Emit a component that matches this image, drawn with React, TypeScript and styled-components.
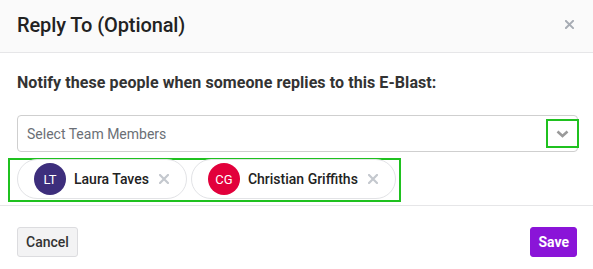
import React from "react";
import styled, { createGlobalStyle } from "styled-components";

const Global = createGlobalStyle`
  html, body { margin: 0; padding: 0; background: #ffffff; }
  body { font-family: Roboto, "Liberation Sans", Arial, sans-serif; color: #2b2b2b; }
  * { box-sizing: border-box; }
`;

const Modal = styled.div`
  width: 593px;
  height: 269px;
  background: #ffffff;
  display: flex;
  flex-direction: column;
`;

const Header = styled.div`
  height: 53px;
  background: #fafafa;
  border-bottom: 1px solid #e6e6e8;
  display: flex;
  align-items: center;
  justify-content: space-between;
  padding: 0 19px 2px 17px;
`;

const Title = styled.h2`
  margin: 0;
  font-size: 20px;
  font-weight: 500;
  color: #222222;
  letter-spacing: -0.1px;
`;

const CloseButton = styled.button`
  border: 0;
  background: transparent;
  padding: 0;
  width: 10px;
  height: 10px;
  display: flex;
  align-items: center;
  justify-content: center;
  cursor: pointer;
  margin-bottom: 2px;
`;

const Body = styled.div`
  padding: 20px 15px 3px 17px;
  display: flex;
  flex-direction: column;
`;

const Label = styled.div`
  font-size: 16px;
  line-height: 20px;
  font-weight: 700;
  color: #333333;
  letter-spacing: 0.08px;
  margin-bottom: 22px;
`;

const Select = styled.div`
  height: 37px;
  border: 1px solid #cfcfcf;
  border-radius: 4px;
  display: flex;
  align-items: center;
  padding-left: 9px;
`;

const Placeholder = styled.span`
  flex: 1;
  font-size: 14px;
  color: #6b6f76;
`;

const Indicator = styled.div`
  width: 33px;
  height: 29px;
  border: 2px solid #1fc11f;
  margin-right: -2px;
  display: flex;
  align-items: center;
  justify-content: center;
`;

const ChipRow = styled.div`
  margin-top: 6px;
  margin-left: -9px;
  width: fit-content;
  border: 2px solid #1fc11f;
  padding: 0 3px 1px 7px;
  display: flex;
  gap: 4px;
`;

const Chip = styled.div`
  height: 40px;
  border: 1px solid #e2e3e6;
  border-radius: 20px;
  display: flex;
  align-items: center;
  padding: 0 17px 0 16px;
  margin-top: -1px;
`;

const Avatar = styled.div<{ $bg: string }>`
  width: 32px;
  height: 32px;
  border-radius: 50%;
  background: ${(p) => p.$bg};
  color: #ffffff;
  font-size: 13px;
  font-weight: 400;
  display: flex;
  align-items: center;
  justify-content: center;
  margin-right: 8px;
`;

const Name = styled.span`
  font-size: 14px;
  font-weight: 500;
  color: #222222;
  margin-right: 10px;
`;

const Remove = styled.span`
  display: flex;
  align-items: center;
`;

const Footer = styled.div`
  border-top: 1px solid #e6e6e8;
  padding: 21px 16px 0 17px;
  display: flex;
  justify-content: space-between;
`;

const Button = styled.button<{ $primary?: boolean }>`
  height: 30px;
  padding: 0 ${(p) => (p.$primary ? "7px" : "8px")};
  border-radius: 3px;
  font-family: Roboto, "Liberation Sans", Arial, sans-serif;
  font-size: 14px;
  font-weight: ${(p) => (p.$primary ? 700 : 500)};
  background: ${(p) => (p.$primary ? "#8a14d8" : "#f3f3f4")};
  color: ${(p) => (p.$primary ? "#ffffff" : "#333333")};
  border: 1px solid ${(p) => (p.$primary ? "#8a14d8" : "#dcdcdf")};
  cursor: pointer;
`;

const XIcon = ({ size, color, stroke }: { size: number; color: string; stroke: number }) => (
  <svg width={size} height={size} viewBox="0 0 10 10">
    <path d="M1 1 L9 9 M9 1 L1 9" stroke={color} strokeWidth={stroke} strokeLinecap="square" />
  </svg>
);

const Chevron = () => (
  <svg width="13" height="8" viewBox="0 0 13 8">
    <path d="M1.5 1.5 L6.5 6 L11.5 1.5" fill="none" stroke="#9a9a9a" strokeWidth="2.6" />
  </svg>
);

const people = [
  { initials: "LT", name: "Laura Taves", color: "#3d2e7c" },
  { initials: "CG", name: "Christian Griffiths", color: "#e2003b" },
];

export default function App() {
  return (
    <>
      <Global />
      <Modal>
        <Header>
          <Title>Reply To (Optional)</Title>
          <CloseButton aria-label="Close">
            <XIcon size={9} color="#a7acb4" stroke={2.2} />
          </CloseButton>
        </Header>
        <Body>
          <Label>Notify these people when someone replies to this E-Blast:</Label>
          <Select>
            <Placeholder>Select Team Members</Placeholder>
            <Indicator>
              <Chevron />
            </Indicator>
          </Select>
          <ChipRow>
            {people.map((p) => (
              <Chip key={p.initials}>
                <Avatar $bg={p.color}>{p.initials}</Avatar>
                <Name>{p.name}</Name>
                <Remove>
                  <XIcon size={10} color="#c4c8ce" stroke={2.2} />
                </Remove>
              </Chip>
            ))}
          </ChipRow>
        </Body>
        <Footer>
          <Button>Cancel</Button>
          <Button $primary>Save</Button>
        </Footer>
      </Modal>
    </>
  );
}
